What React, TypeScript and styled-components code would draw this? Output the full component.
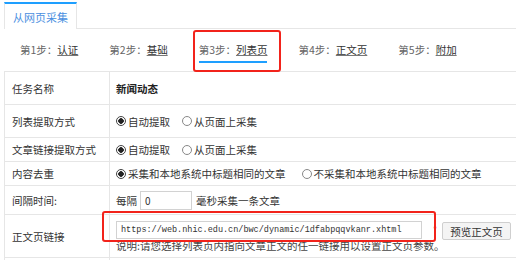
import React from "react";
import styled, { createGlobalStyle } from "styled-components";

const GlobalStyle = createGlobalStyle`
    body {
        margin: 0;
        background: #fff;
        font-family: "Noto Sans CJK SC", "Noto Sans", sans-serif;
        font-size: 10.5px;
        color: #333;
    }
`;

const Page = styled.div`
    width: 516px;
    height: 260px;
    overflow: hidden;
    padding-left: 4px;
    box-sizing: border-box;
`;

const TabBar = styled.div`
    display: flex;
    width: 560px;
    margin-top: 2px;
    border-bottom: 1px solid #e6e6e6;
`;

const Tab = styled.div`
    height: 25px;
    padding: 0 8px;
    display: flex;
    align-items: center;
    border-top: 2px solid #1e9fff;
    border-left: 1px solid #e6e6e6;
    border-right: 1px solid #e6e6e6;
    margin-bottom: -1px;
    background: #fff;
    color: #4a8fdf;
    font-size: 11px;
`;

const StepBar = styled.div`
    display: flex;
    gap: 31px;
    width: 560px;
    height: 43px;
    padding: 14px 0 0 16px;
    box-sizing: border-box;
    border-bottom: 1px solid #e6e6e6;
`;

const Step = styled.div<{ active?: boolean }>`
    position: relative;
    align-self: flex-start;
    padding-bottom: 4px;
    line-height: 14px;
    color: #666;
    border-bottom: 2px solid ${p => (p.active ? "#1e9fff" : "transparent")};

    span {
        color: #333;
        text-decoration: underline;
        text-decoration-color: #777;
    }
`;

const StepMark = styled.div`
    position: absolute;
    left: -6px;
    right: -14px;
    top: -13px;
    bottom: -11px;
    border: 2.5px solid #f2231b;
    border-radius: 3px;
    pointer-events: none;
`;

const Table = styled.div`
    width: 560px;
    border-left: 1px solid #e6e6e6;
`;

const Row = styled.div<{ h: number }>`
    position: relative;
    display: grid;
    grid-template-columns: 105px 1fr;
    height: ${p => p.h}px;
    border-bottom: 1px solid #e6e6e6;
`;

const Label = styled.div`
    display: flex;
    align-items: center;
    padding-left: 7px;
    border-right: 1px solid #e6e6e6;
    color: #333;
`;

const Value = styled.div<{ bold?: boolean }>`
    display: flex;
    align-items: center;
    padding-left: 6px;
    font-weight: ${p => (p.bold ? 700 : 400)};
    color: ${p => (p.bold ? "#222" : "#333")};
`;

const Options = styled.div<{ gap: number }>`
    display: flex;
    align-items: center;
    gap: ${p => p.gap}px;
`;

const Radio = styled.label<{ checked?: boolean }>`
    display: flex;
    align-items: center;
    gap: 2px;

    &::before {
        content: "";
        width: 8px;
        height: 8px;
        border-radius: 50%;
        border: 1px solid ${p => (p.checked ? "#444" : "#888")};
        background: ${p => (p.checked ? "radial-gradient(circle, #222 0 2.5px, #fff 3px)" : "#fff")};
    }
`;

const SmallInput = styled.div`
    width: 46px;
    height: 17px;
    margin: 0 4px 0 3px;
    padding-left: 4px;
    border: 1px solid #d2d2d2;
    display: flex;
    align-items: center;
    font-size: 10px;
`;

const LinkCell = styled.div`
    display: flex;
    flex-direction: column;
    padding: 4px 0 0 6px;
`;

const LinkLine = styled.div`
    display: flex;
    align-items: center;
`;

const UrlInput = styled.div`
    width: 300px;
    height: 16px;
    padding-left: 4px;
    border: 1px solid #d2d2d2;
    display: flex;
    align-items: center;
    font-family: "Liberation Mono", monospace;
    font-size: 8.5px;
    color: #333;
`;

const Required = styled.span`
    margin: 0 5px 0 11px;
    color: #f04040;
    font-size: 9px;
`;

const PreviewButton = styled.button`
    height: 18px;
    margin-top: 3px;
    padding: 0 7px;
    border: 1px solid #cfcfcf;
    border-radius: 2px;
    background: #f4f4f4;
    font-family: inherit;
    font-size: 10.5px;
    color: #333;
`;

const Hint = styled.div`
    margin-top: -1px;
    line-height: 13px;
    color: #444;
`;

const LinkMark = styled.div`
    position: absolute;
    left: 97px;
    top: -4px;
    width: 330px;
    height: 27px;
    border: 2.5px solid #f2231b;
    border-radius: 3px;
    pointer-events: none;
`;

const steps = [
    { no: 1, name: "认证" },
    { no: 2, name: "基础" },
    { no: 3, name: "列表页" },
    { no: 4, name: "正文页" },
    { no: 5, name: "附加" },
];

export default function App() {
    return (
        <>
            <GlobalStyle />
            <Page>
                <TabBar>
                    <Tab>从网页采集</Tab>
                </TabBar>
                <StepBar>
                    {steps.map(s => (
                        <Step key={s.no} active={s.no === 3}>
                            第{s.no}步：<span>{s.name}</span>
                            {s.no === 3 && <StepMark />}
                        </Step>
                    ))}
                </StepBar>
                <Table>
                    <Row h={32}>
                        <Label>任务名称</Label>
                        <Value bold>新闻动态</Value>
                    </Row>
                    <Row h={32}>
                        <Label>列表提取方式</Label>
                        <Value>
                            <Options gap={12}>
                                <Radio checked>自动提取</Radio>
                                <Radio>从页面上采集</Radio>
                            </Options>
                        </Value>
                    </Row>
                    <Row h={23}>
                        <Label>文章链接提取方式</Label>
                        <Value>
                            <Options gap={12}>
                                <Radio checked>自动提取</Radio>
                                <Radio>从页面上采集</Radio>
                            </Options>
                        </Value>
                    </Row>
                    <Row h={23}>
                        <Label>内容去重</Label>
                        <Value>
                            <Options gap={16}>
                                <Radio checked>采集和本地系统中标题相同的文章</Radio>
                                <Radio>不采集和本地系统中标题相同的文章</Radio>
                            </Options>
                        </Value>
                    </Row>
                    <Row h={28}>
                        <Label>间隔时间:</Label>
                        <Value>
                            每隔<SmallInput>0</SmallInput>毫秒采集一条文章
                        </Value>
                    </Row>
                    <Row h={42}>
                        <Label>正文页链接</Label>
                        <LinkCell>
                            <LinkLine>
                                <UrlInput>https://web.nhic.edu.cn/bwc/dynamic/1dfabpqqvkanr.xhtml</UrlInput>
                                <Required>*</Required>
                                <PreviewButton>预览正文页</PreviewButton>
                            </LinkLine>
                            <Hint>说明:请您选择列表页内指向文章正文的任一链接用以设置正文页参数。</Hint>
                        </LinkCell>
                        <LinkMark />
                    </Row>
                    <Row h={20}>
                        <Label />
                        <Value />
                    </Row>
                </Table>
            </Page>
        </>
    );
}
